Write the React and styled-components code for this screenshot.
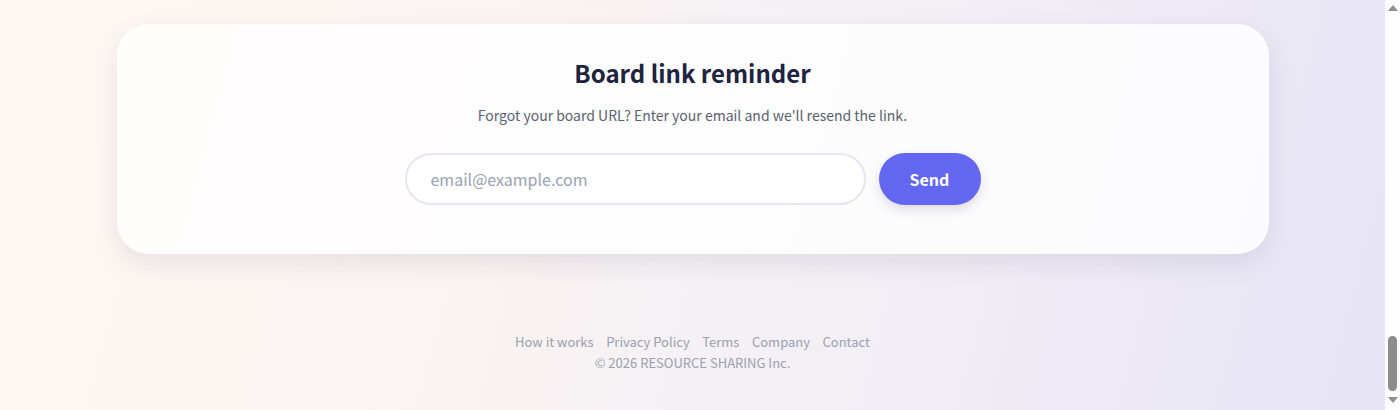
import React from "react";
import styled, { createGlobalStyle } from "styled-components";

const GlobalStyle = createGlobalStyle`
  html, body { margin: 0; padding: 0; }
  body {
    font-family: "Noto Sans CJK JP", "Noto Sans", sans-serif;
    color: #1e2340;
    overflow: hidden;
  }
`;

const Viewport = styled.div`
  display: flex;
  height: 410px;
`;

const Page = styled.div`
  flex: 1;
  min-width: 0;
  display: flex;
  flex-direction: column;
  align-items: center;
  padding-top: 24px;
  box-sizing: border-box;
  background: linear-gradient(105deg, #fff7f2 0%, #fbf4f2 30%, #f3eff5 62%, #e6e4f5 100%);
`;

const Scrollbar = styled.div`
  width: 15px;
  flex: none;
  background: #fdfdfd;
  display: flex;
  flex-direction: column;
  align-items: center;
  justify-content: space-between;
  padding: 5px 0 7px;
  box-sizing: border-box;
`;

const Arrow = styled.div`
  width: 0;
  height: 0;
  border-left: 5px solid transparent;
  border-right: 5px solid transparent;
  ${(p) => (p.$down ? "border-top: 6px solid #8e8e8e;" : "border-bottom: 6px solid #8e8e8e;")}
`;

const TrackEnd = styled.div`
  display: flex;
  flex-direction: column;
  align-items: center;
  gap: 6px;
`;

const Thumb = styled.div`
  width: 9px;
  height: 55px;
  border-radius: 5px;
  background: #8c8c8c;
`;

const Card = styled.section`
  width: 1152px;
  box-sizing: border-box;
  background: rgba(255, 255, 255, 0.82);
  border-radius: 32px;
  box-shadow: 0 10px 26px rgba(30, 35, 64, 0.09);
  padding: 32px 40px 49px;
  display: flex;
  flex-direction: column;
  align-items: center;
`;

const Title = styled.h2`
  margin: 0;
  font-size: 24px;
  line-height: 34px;
  font-weight: 700;
  color: #1e2340;
`;

const Subtitle = styled.p`
  margin: 15px 0 0;
  font-size: 14px;
  line-height: 21px;
  color: #5b6171;
`;

const Form = styled.form`
  margin-top: 27px;
  display: flex;
  gap: 13px;
`;

const EmailInput = styled.input`
  width: 461px;
  height: 52px;
  box-sizing: border-box;
  border: 2px solid #e2e7f0;
  border-radius: 999px;
  background: #fff;
  padding: 0 24px;
  font-family: inherit;
  font-size: 16px;
  color: #1e2340;
  outline: none;
  &::placeholder { color: #99a2b4; }
`;

const SendButton = styled.button`
  width: 102px;
  height: 52px;
  border: none;
  border-radius: 999px;
  background: #6366f1;
  color: #fff;
  font-family: inherit;
  font-size: 16px;
  font-weight: 700;
  box-shadow: 0 5px 12px rgba(30, 35, 64, 0.14);
  cursor: pointer;
`;

const Footer = styled.footer`
  margin-top: 78px;
  display: flex;
  flex-direction: column;
  align-items: center;
`;

const Links = styled.nav`
  display: flex;
  gap: 12.5px;
`;

const FootLink = styled.a`
  font-size: 13px;
  line-height: 20px;
  color: #9aa0ae;
  text-decoration: none;
`;

const Copy = styled.div`
  margin-top: 1px;
  font-size: 13px;
  line-height: 20px;
  color: #9aa0ae;
`;

export default function App() {
  return (
    <>
      <GlobalStyle />
      <Viewport>
        <Page>
          <Card>
            <Title>Board link reminder</Title>
            <Subtitle>Forgot your board URL? Enter your email and we'll resend the link.</Subtitle>
            <Form onSubmit={(e) => e.preventDefault()}>
              <EmailInput type="email" placeholder="email@example.com" />
              <SendButton type="submit">Send</SendButton>
            </Form>
          </Card>
          <Footer>
            <Links>
              <FootLink href="#">How it works</FootLink>
              <FootLink href="#">Privacy Policy</FootLink>
              <FootLink href="#">Terms</FootLink>
              <FootLink href="#">Company</FootLink>
              <FootLink href="#">Contact</FootLink>
            </Links>
            <Copy>© 2026 RESOURCE SHARING Inc.</Copy>
          </Footer>
        </Page>
        <Scrollbar aria-hidden="true">
          <Arrow />
          <TrackEnd>
            <Thumb />
            <Arrow $down />
          </TrackEnd>
        </Scrollbar>
      </Viewport>
    </>
  );
}
